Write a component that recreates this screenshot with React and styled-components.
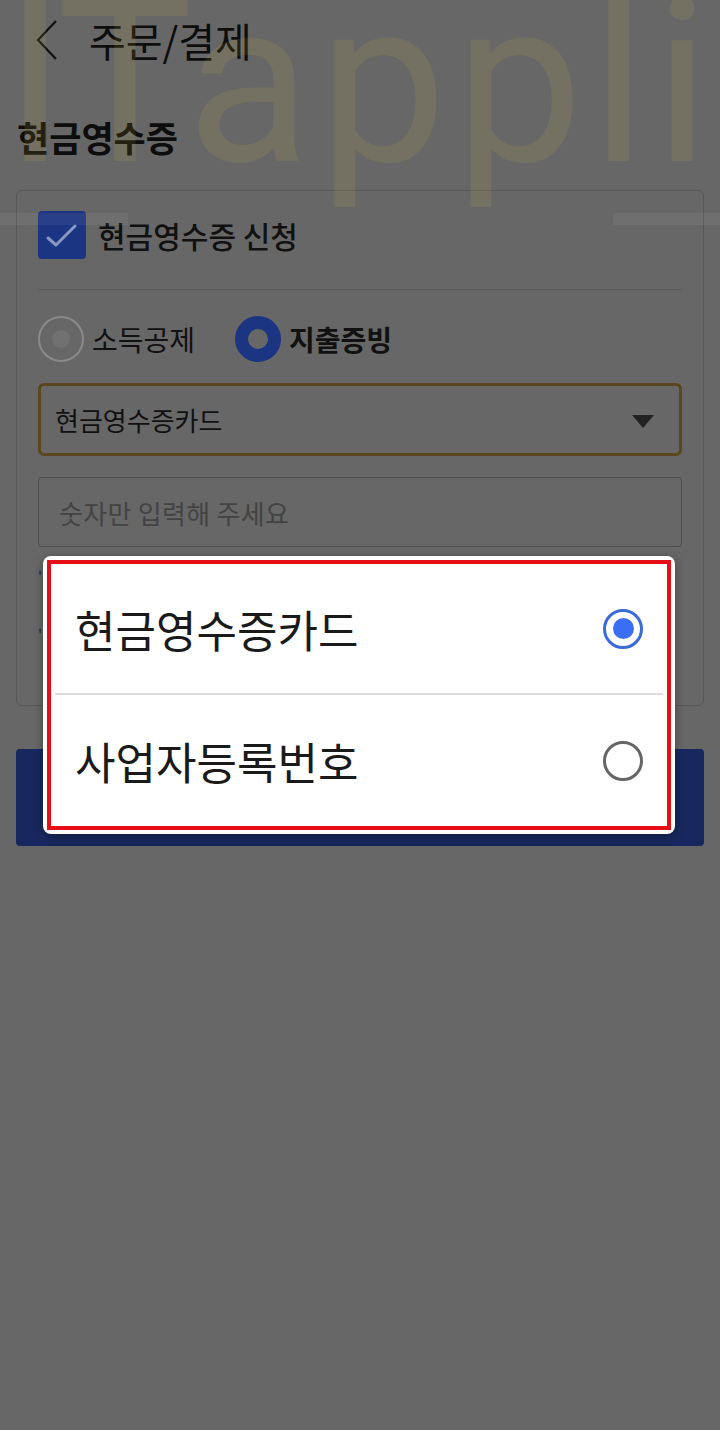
import React, { useState } from "react";
import styled, { createGlobalStyle } from "styled-components";

const GlobalStyle = createGlobalStyle`
  html, body {
    margin: 0;
    padding: 0;
    background: #676767;
  }
  * {
    box-sizing: border-box;
  }
  body {
    font-family: "Noto Sans CJK KR", "Noto Sans", sans-serif;
    color: #111;
  }
`;

const Page = styled.div`
  position: relative;
  width: 720px;
  min-height: 1430px;
  background: #676767;
  overflow: hidden;
`;

const Watermark = styled.div`
  position: absolute;
  top: -31px;
  left: 4px;
  font-family: Roboto, "Liberation Sans", sans-serif;
  font-weight: 400;
  font-size: 228px;
  letter-spacing: -6px;
  line-height: 1;
  color: rgba(230, 200, 60, 0.11);
  pointer-events: none;
  white-space: nowrap;
  z-index: 5;
`;

const WideLetters = styled.span`
  letter-spacing: 8px;
`;

const Streak = styled.div`
  position: absolute;
  top: 213px;
  height: 12px;
  background: rgba(255, 255, 255, 0.06);
  pointer-events: none;
  z-index: 5;
  left: ${p => (p.$side === "left" ? "0" : "auto")};
  right: ${p => (p.$side === "right" ? "0" : "auto")};
  width: ${p => p.$width}px;
`;

const Header = styled.header`
  display: flex;
  align-items: center;
  gap: 29px;
  height: 80px;
  padding-left: 34px;
`;

const BackButton = styled.button`
  display: flex;
  align-items: center;
  justify-content: center;
  padding: 0;
  border: 0;
  background: none;
  width: 26px;
  height: 42px;
  color: #111;
`;

const Title = styled.h1`
  margin: 0;
  font-size: 40px;
  font-weight: 400;
  color: #0d0d0d;
`;

const Section = styled.section`
  padding: 0 16px;
`;

const Heading = styled.h2`
  margin: 37px 0 33px 1px;
  font-size: 35px;
  line-height: 40px;
  font-weight: 700;
  color: #0d0d0d;
`;

const Card = styled.div`
  position: relative;
  border: 1.5px solid #575757;
  border-radius: 6px;
  padding: 20px 21px 57px;
`;

const CheckRow = styled.label`
  display: flex;
  align-items: center;
  gap: 12px;
  height: 48px;
  font-size: 30px;
  font-weight: 500;
`;

const CheckBox = styled.span`
  display: flex;
  align-items: center;
  justify-content: center;
  width: 48px;
  height: 48px;
  border-radius: 4px;
  background: #1c3582;
`;

const Divider = styled.hr`
  margin: 30px 0 26px;
  border: 0;
  border-top: 1.5px solid #5a5a5a;
`;

const RadioRow = styled.div`
  display: flex;
  align-items: center;
  height: 46px;
`;

const RadioOption = styled.label`
  display: flex;
  align-items: center;
  gap: 8px;
  margin-right: 40px;
  font-size: 28px;
  font-weight: ${p => (p.$checked ? 700 : 400)};
`;

const RadioMark = styled.span`
  display: flex;
  align-items: center;
  justify-content: center;
  width: 46px;
  height: 46px;
  border-radius: 50%;
  border: ${p => (p.$checked ? "13px solid #1c3582" : "2px solid #8a8a8a")};
  background: #676767;

  &::after {
    content: "";
    width: 18px;
    height: 18px;
    border-radius: 50%;
    background: ${p => (p.$checked ? "#676767" : "#717171")};
  }
`;

const Select = styled.div`
  display: flex;
  align-items: center;
  justify-content: space-between;
  margin-top: 21px;
  height: 73px;
  padding: 0 25px 0 14px;
  border: 3px solid #5a471d;
  border-radius: 6px;
  font-size: 26px;
  color: #111;
`;

const Caret = styled.span`
  width: 0;
  height: 0;
  margin-top: 4px;
  border-left: 11px solid transparent;
  border-right: 11px solid transparent;
  border-top: 13px solid #222;
`;

const Input = styled.input`
  display: block;
  width: 100%;
  margin-top: 21px;
  height: 70px;
  padding: 0 20px;
  border: 1.5px solid #4d4d4d;
  border-radius: 3px;
  background: transparent;
  font-family: inherit;
  font-size: 26px;
  letter-spacing: 0.3px;
  color: #111;
  outline: none;

  &::placeholder {
    color: #434343;
  }
`;

const Notes = styled.ul`
  margin: 14px 0 0;
  padding: 0;
  list-style: none;
  font-size: 15px;
  line-height: 29px;
  color: #2a2a2a;
`;

const PayButton = styled.button`
  display: block;
  width: 100%;
  height: 97px;
  margin-top: 43px;
  border: 0;
  border-radius: 4px;
  background: #18285e;
  font-family: inherit;
  font-size: 30px;
  font-weight: 700;
  color: #8a93b0;
`;

const Popup = styled.div`
  position: absolute;
  top: 365px;
  left: 26px;
  width: 632px;
  padding: 4px;
  border-radius: 8px;
  background: #fff;
  box-shadow: 0 2px 10px rgba(0, 0, 0, 0.35);
  z-index: 10;
`;

const PopupFrame = styled.div`
  border: 4px solid #e60f17;
`;

const Option = styled.div`
  display: flex;
  align-items: center;
  justify-content: space-between;
  height: 129px;
  padding: 0 24px 0 24px;
  font-size: 44px;
  color: #1a1a1a;
  cursor: pointer;

  & + & {
    height: 133px;
    border-top: 2px solid #dcdcdc;
    margin: 0 4px;
    padding: 0 20px;
  }
`;

const OptionRadio = styled.span`
  display: flex;
  align-items: center;
  justify-content: center;
  width: 40px;
  height: 40px;
  border-radius: 50%;
  border: 3.5px solid ${p => (p.$checked ? "#3b6ad9" : "#666")};

  &::after {
    content: "";
    display: ${p => (p.$checked ? "block" : "none")};
    width: 21px;
    height: 21px;
    border-radius: 50%;
    background: #3b6ff3;
  }
`;

const options = ["현금영수증카드", "사업자등록번호"];

export default function App() {
  const [picked, setPicked] = useState(0);

  return (
    <Page>
      <GlobalStyle />
      <Header>
        <BackButton aria-label="뒤로">
          <svg width="24" height="42" viewBox="0 0 24 42" fill="none">
            <path d="M21 2 L3 21 L21 40" stroke="#111" strokeWidth="2.2" />
          </svg>
        </BackButton>
        <Title>주문/결제</Title>
      </Header>

      <Section>
        <Heading>현금영수증</Heading>
        <Card>
          <CheckRow>
            <CheckBox>
              <svg width="48" height="48" viewBox="0 0 48 48" fill="none">
                <path
                  d="M10 27 L18 34 L37 15"
                  stroke="#8898c2"
                  strokeWidth="3"
                  strokeLinecap="round"
                  strokeLinejoin="round"
                />
              </svg>
            </CheckBox>
            현금영수증 신청
          </CheckRow>
          <Divider />
          <RadioRow>
            <RadioOption>
              <RadioMark />
              소득공제
            </RadioOption>
            <RadioOption $checked>
              <RadioMark $checked />
              지출증빙
            </RadioOption>
          </RadioRow>
          <Select>
            {options[picked]}
            <Caret />
          </Select>
          <Input placeholder="숫자만 입력해 주세요" />
          <Notes>
            <li>' 현금영수증 발급은 결제 완료 후 진행됩니다.</li>
            <li>ㅣ 사업자등록번호는 숫자만 입력해 주세요.</li>
            <li>' 입력하신 정보는 저장되지 않습니다.</li>
          </Notes>

          <Popup>
            <PopupFrame>
              {options.map((label, i) => (
                <Option key={label} onClick={() => setPicked(i)}>
                  {label}
                  <OptionRadio $checked={picked === i} />
                </Option>
              ))}
            </PopupFrame>
          </Popup>
        </Card>
        <PayButton>결제하기</PayButton>
      </Section>

      <Watermark>
        IT<WideLetters>appli</WideLetters>
      </Watermark>
      <Streak $side="left" $width={128} />
      <Streak $side="right" $width={107} />
    </Page>
  );
}
